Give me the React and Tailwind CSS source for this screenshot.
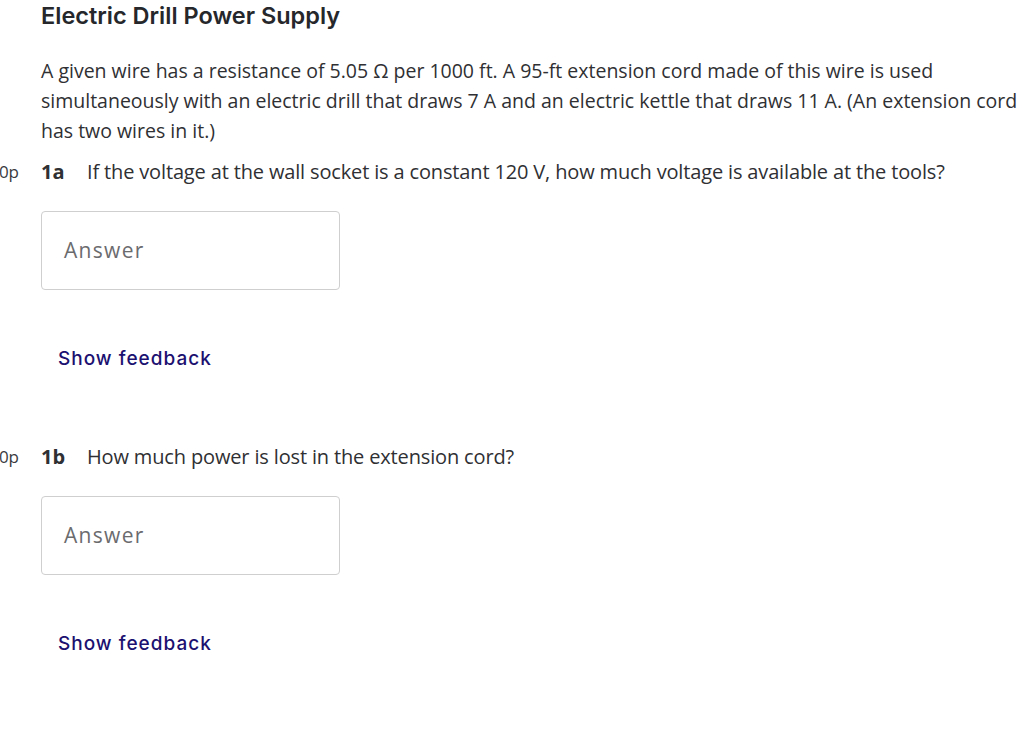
export default function App() {
  const questions = [
    { id: '1a', text: 'If the voltage at the wall socket is a constant 120 V, how much voltage is available at the tools?' },
    { id: '1b', text: 'How much power is lost in the extension cord?' },
  ]

  return (
    <div className="w-[1024px] h-[748px] overflow-hidden bg-white text-[#2f3033]" style={{ fontFamily: '"Open Sans", "Noto Sans", sans-serif' }}>
      <div className="pl-[41px] pt-px">
        <h1 className="text-[23.5px] leading-[30px] font-semibold text-[#25272b]" style={{ fontFamily: 'Inter, "Noto Sans", sans-serif' }}>
          Electric Drill Power Supply
        </h1>
        <p className="mt-[25px] text-[19.5px] leading-[30px]">
          A given wire has a resistance of 5.05 Ω per 1000 ft. A 95-ft extension cord made of this wire is used simultaneously with an electric drill that draws 7 A and an electric kettle that draws 11 A. (An extension cord has two wires in it.)
        </p>
      </div>

      <div className="mt-[11px]">
        {questions.map((q) => (
          <div key={q.id} className="h-[285px]">
            <div className="flex items-center h-[30px]">
              <div className="w-[41px] shrink-0 flex justify-end pr-[22px]">
                <span className="whitespace-nowrap text-[17px] text-[#3a3b3e]">0p</span>
              </div>
              <span className="w-[46px] shrink-0 text-[20px] font-bold text-[#2f3033]">{q.id}</span>
              <span className="text-[20px] tracking-[-0.15px]">{q.text}</span>
            </div>
            <div className="pl-[41px] mt-[24px]">
              <div className="w-[299px] h-[79px] border border-[#cfcfcf] rounded-[4px] flex items-center px-[22px]">
                <span className="text-[21px] tracking-[1.3px] text-[#6b6b6e]">Answer</span>
              </div>
              <button className="mt-[55px] ml-[17px] text-[19px] tracking-[1px] font-medium text-[#1c1170]" style={{ fontFamily: 'Inter, "Noto Sans", sans-serif' }}>
                Show feedback
              </button>
            </div>
          </div>
        ))}
      </div>
    </div>
  )
}
